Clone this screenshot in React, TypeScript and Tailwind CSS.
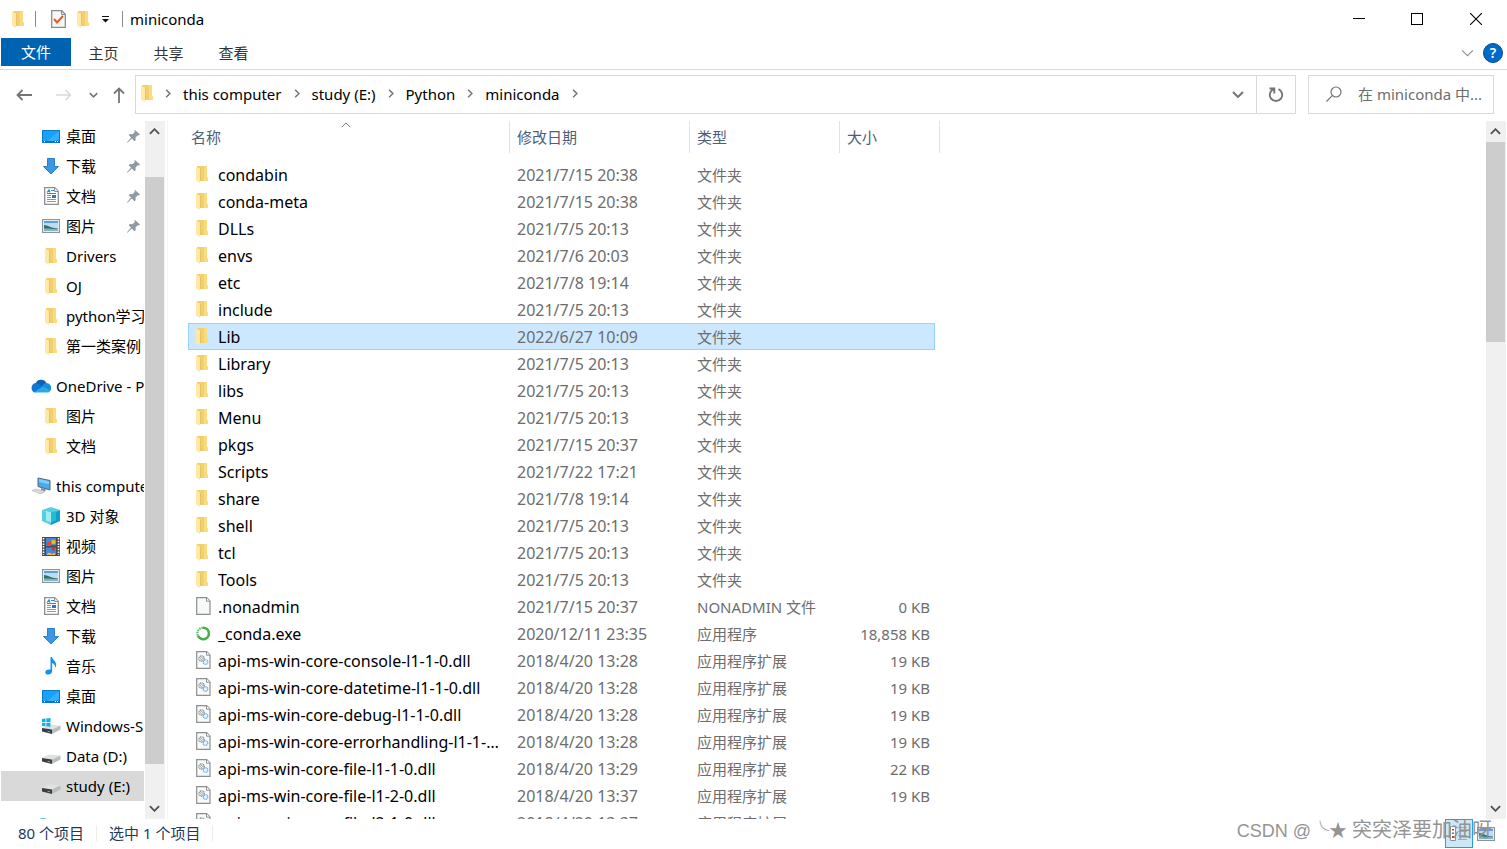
import { useState } from "react";
import type { ReactNode } from "react";

type FileKind = "folder" | "blank" | "exe" | "dll";

interface FileEntry {
  name: string;
  date: string;
  kind: FileKind;
  type: string;
  size?: string;
}

interface NavEntry {
  label: string;
  icon: ReactNode;
  pinned?: boolean;
  root?: boolean;
  spaced?: boolean;
  current?: boolean;
}

const FolderIcon = () => (
  <svg width="12" height="17" viewBox="0 0 12 17" aria-hidden="true">
    <path d="M1 0h10v11l1 1v3H2z" fill="#f3d06d" />
    <path d="M8 0h3v11l1 1v3H8z" fill="#fadc80" />
    <path d="M0 .5l4 2.2V17L0 14.6z" fill="#ffe9a6" />
    <path d="M4 2.7h1V15H4z" fill="#e8c360" />
  </svg>
);

const DesktopIcon = () => (
  <svg width="18" height="13" viewBox="0 0 18 13" aria-hidden="true">
    <rect x=".5" y=".5" width="17" height="12" fill="#18a0fb" stroke="#0b7bc9" />
    <path d="M17 1v8L8 12H4z" fill="#35b0ff" />
    <path d="M1 11.5h16" stroke="#0b6fb8" />
    <path d="M2 11.5h1M13 11.5h1M15 11.5h1" stroke="#fff" />
  </svg>
);

const DownloadIcon = () => (
  <svg width="18" height="17" viewBox="0 0 18 17" aria-hidden="true">
    <path d="M5.5.5h7v8h4L9 16 1.5 8.5h4z" fill="#3d96e4" stroke="#2b7ecb" />
  </svg>
);

const DocumentIcon = () => (
  <svg width="15" height="18" viewBox="0 0 15 18" aria-hidden="true">
    <path d="M.7.7h10l3.6 3.6v13H.7z" fill="#fff" stroke="#8a8f94" strokeWidth="1.3" />
    <path d="M10.5.7v3.8h3.8" fill="#eee" stroke="#8a8f94" />
    <path d="M3 5.500L5 3l1 2.500M7 3.500h3M3 6.500h9" fill="none" stroke="#1b8fd6" strokeWidth="1.2" />
    <path d="M3 8.5h4M3 10.5h4M3 12.5h9M3 14.5h9" stroke="#7f9bb0" />
    <path d="M8 8h4v3H8z" fill="#2f78b9" />
  </svg>
);

const PictureIcon = () => (
  <svg width="18" height="14" viewBox="0 0 18 14" aria-hidden="true">
    <rect x=".6" y=".6" width="16.8" height="12.8" fill="#fff" stroke="#8f9498" strokeWidth="1.2" />
    <path d="M2 2h14v10H2z" fill="#b9def8" />
    <path d="M2 2h14v2H2z" fill="#5a9fe0" />
    <path d="M2 6c4 0 6 3 14 3.5V12H2z" fill="#3b6f60" />
    <path d="M2 9.5c5-.5 9 1 14 .5v2H2z" fill="#7db4d0" />
  </svg>
);

const CloudIcon = () => (
  <svg width="20" height="14" viewBox="0 0 20 14" aria-hidden="true">
    <path d="M4.5 4.5A6 6 0 0 1 15.5 4l-3 5-8-2z" fill="#0f5fb5" />
    <path d="M4.6 4a5 5 0 0 0-1 9.5L12 8 7.5 4.8A6 6 0 0 0 4.6 4z" fill="#0f78d4" />
    <path d="M15.5 4a4.8 4.8 0 0 1 3.5 8L11 7.5A5.5 5.5 0 0 1 15.5 4z" fill="#1490df" />
    <path d="M3 13.3L11.5 7.7l8 4a4 4 0 0 1-3.5 1.9H5a5 5 0 0 1-2-.3z" fill="#28a8ea" />
  </svg>
);

const ComputerIcon = () => (
  <svg width="20" height="18" viewBox="0 0 20 18" aria-hidden="true">
    <path d="M7 1l12 2.5v9.5L7 9.5z" fill="#47a9ee" stroke="#54667a" />
    <path d="M8 2l10 2.3v3L8 5z" fill="#85cbf8" />
    <path d="M10 11l5 1.5-1 2-4-1.5z" fill="#7d8a96" />
    <path d="M1 13.5l4-1.5 9 2.5L9.5 17z" fill="#d4dadd" stroke="#b3babf" strokeWidth=".7" />
  </svg>
);

const CubeIcon = () => (
  <svg width="18" height="18" viewBox="0 0 18 18" aria-hidden="true">
    <path d="M9 0l9 3-9 3.500L0 3z" fill="#56cfdd" />
    <path d="M0 3l9 3.5V18l-9-4z" fill="#4fd0df" />
    <path d="M18 3L9 6.5V18l9-4z" fill="#0b9fd0" />
    <path d="M9 5.500L4 4v9.500l5 2z" fill="#a4ebf2" />
    <path d="M9 5.500L14 4v9.500l-5 2z" fill="#28b9d4" />
  </svg>
);

const VideoIcon = () => (
  <svg width="18" height="19" viewBox="0 0 18 19" aria-hidden="true">
    <path d="M0 0h18v19H0z" fill="#4a4a4a" />
    <path d="M1.5 1v17M16.5 1v17" stroke="#fff" strokeWidth="1.6" strokeDasharray="1.5 1.2" />
    <path d="M4 1h10v8H4zM4 10.5h10V18H4z" fill="#4c86dc" />
    <path d="M5 5h4v3H5z" fill="#d94a2c" />
    <circle cx="11.5" cy="5" r="2.2" fill="#e3b92c" />
    <path d="M9 8h5v1H9z" fill="#2f7a3a" />
    <circle cx="11.5" cy="12" r="1.6" fill="#c23a26" />
    <path d="M5 17l2-1.5 3 1.5 3-1v2H5z" fill="#e8c33c" />
  </svg>
);

const MusicIcon = () => (
  <svg width="12" height="18" viewBox="0 0 12 18" aria-hidden="true">
    <path d="M5.5 0h1.6c.2 3 4.4 4 4.1 8.5-.1 1-.5 1.7-1 2.3C10.500 8 9 6.800 7.100 6v8.500C7 16.500 5 17.500 3.200 17.500 1.400 17.500.3 16.600.3 15.200c0-1.800 2-3.200 5.200-2.600z" fill="#0c94f2" />
  </svg>
);

const DriveIcon = ({ system = false }: { system?: boolean }) => (
  <svg width="19" height="16" viewBox="0 0 19 16" aria-hidden="true">
    <path d="M0 10l7-3.5 11.5 1L10 11.5z" fill="#dfe1e2" />
    <path d="M0 10l10 1.5V16L0 13.5z" fill="#3b3d3f" />
    <path d="M10 11.5l8.5-4v4L10 16z" fill="#b9bcbe" />
    <path d="M5.5 12.8l2.5.5v1l-2.5-.5z" fill="#35e03a" />
    {system && (
      <>
        <path d="M0 0h9v8H0z" fill="#fff" />
        <path d="M0 1l3.5-.5V4H0zM4.3.4L8.500 0v4H4.300zM0 4.700h3.500v3.500L0 7.700zM4.300 4.700h4.200v4l-4.200-.5z" fill="#12b0e8" />
      </>
    )}
  </svg>
);

const NetworkIcon = () => (
  <svg width="20" height="16" viewBox="0 0 20 16" aria-hidden="true">
    <circle cx="12" cy="7" r="7" fill="#57b7dd" />
    <path d="M6 5c4-2 8 2 12 0" fill="none" stroke="#bfe6f4" strokeWidth="1.5" />
  </svg>
);

const PinIcon = () => (
  <svg width="13" height="13" viewBox="0 0 13 13" aria-hidden="true">
    <path d="M8 0l5 4.5-1.2 1-1-.3L8.500 7.600l.2 2.600-1.200 1L4.800 8.600.5 12.800 0 12.300l4-4.700-2.300-2.300 1.100-1.200 2.700.1L8 1.800 7.200.8z" fill="#8f9aa3" />
  </svg>
);

const PageIcon = () => (
  <svg width="15" height="18" viewBox="0 0 15 18" aria-hidden="true">
    <path d="M.7.7h10l3.3 3.3v13.3H.7z" fill="#f7f8f8" stroke="#8c8f91" strokeWidth="1.2" />
    <path d="M10.5.7v3.5H14" fill="#fff" stroke="#8c8f91" />
  </svg>
);

const ExeIcon = () => (
  <svg width="15" height="15" viewBox="0 0 15 15" aria-hidden="true">
    <path d="M7 1.800a5.700 5.700 0 1 1-5 8" fill="none" stroke="#43b049" strokeWidth="2.600" />
    <path d="M1.700 9.500A5.700 5.700 0 0 1 7 1.800" fill="none" stroke="#5cba61" strokeWidth="2.200" strokeDasharray="1.500 .8" />
  </svg>
);

const DllIcon = () => (
  <svg width="15" height="18" viewBox="0 0 15 18" aria-hidden="true">
    <path d="M.7.7h10l3.3 3.3v13.3H.7z" fill="#f9fafa" stroke="#8c8f91" strokeWidth="1.2" />
    <path d="M10.5.7v3.5H14" fill="#fff" stroke="#8c8f91" />
    <circle cx="5.5" cy="7.5" r="2.6" fill="none" stroke="#8d9398" strokeWidth="1.4" strokeDasharray="1.2 .5" />
    <circle cx="5.5" cy="7.5" r="1" fill="none" stroke="#8d9398" strokeWidth=".7" />
    <circle cx="9.5" cy="11" r="2.3" fill="#e8f3fb" stroke="#78aede" strokeWidth="1.3" strokeDasharray="1.2 .4" />
  </svg>
);

interface ChevronProps {
  direction: "up" | "down" | "right";
  width?: number;
  height?: number;
  color?: string;
  weight?: number;
}

const chevronPaths = {
  up: "M1 6L6 1l5 5",
  down: "M1 1l5 5 5-5",
  right: "M1 1l5 5-5 5",
};

const Chevron = ({ direction, width = 11, height = 7, color = "#505050", weight = 2 }: ChevronProps) => (
  <svg
    width={width}
    height={height}
    viewBox={direction === "right" ? "0 0 7 12" : "0 0 12 7"}
    fill="none"
    stroke={color}
    strokeWidth={weight}
    aria-hidden="true"
  >
    <path d={chevronPaths[direction]} />
  </svg>
);

const navEntries: NavEntry[] = [
  { label: "桌面", icon: <DesktopIcon />, pinned: true },
  { label: "下载", icon: <DownloadIcon />, pinned: true },
  { label: "文档", icon: <DocumentIcon />, pinned: true },
  { label: "图片", icon: <PictureIcon />, pinned: true },
  { label: "Drivers", icon: <FolderIcon /> },
  { label: "OJ", icon: <FolderIcon /> },
  { label: "python学习", icon: <FolderIcon /> },
  { label: "第一类案例", icon: <FolderIcon /> },
  { label: "OneDrive - Personal", icon: <CloudIcon />, root: true, spaced: true },
  { label: "图片", icon: <FolderIcon /> },
  { label: "文档", icon: <FolderIcon /> },
  { label: "this computer", icon: <ComputerIcon />, root: true, spaced: true },
  { label: "3D 对象", icon: <CubeIcon /> },
  { label: "视频", icon: <VideoIcon /> },
  { label: "图片", icon: <PictureIcon /> },
  { label: "文档", icon: <DocumentIcon /> },
  { label: "下载", icon: <DownloadIcon /> },
  { label: "音乐", icon: <MusicIcon /> },
  { label: "桌面", icon: <DesktopIcon /> },
  { label: "Windows-SSD (C:)", icon: <DriveIcon system /> },
  { label: "Data (D:)", icon: <DriveIcon /> },
  { label: "study (E:)", icon: <DriveIcon />, current: true },
  { label: "", icon: <NetworkIcon />, root: true, spaced: true },
];

const folder = (name: string, date: string): FileEntry => ({ name, date, kind: "folder", type: "文件夹" });
const dll = (name: string, date: string, size: string): FileEntry => ({
  name,
  date,
  kind: "dll",
  type: "应用程序扩展",
  size,
});

const files: FileEntry[] = [
  folder("condabin", "2021/7/15 20:38"),
  folder("conda-meta", "2021/7/15 20:38"),
  folder("DLLs", "2021/7/5 20:13"),
  folder("envs", "2021/7/6 20:03"),
  folder("etc", "2021/7/8 19:14"),
  folder("include", "2021/7/5 20:13"),
  folder("Lib", "2022/6/27 10:09"),
  folder("Library", "2021/7/5 20:13"),
  folder("libs", "2021/7/5 20:13"),
  folder("Menu", "2021/7/5 20:13"),
  folder("pkgs", "2021/7/15 20:37"),
  folder("Scripts", "2021/7/22 17:21"),
  folder("share", "2021/7/8 19:14"),
  folder("shell", "2021/7/5 20:13"),
  folder("tcl", "2021/7/5 20:13"),
  folder("Tools", "2021/7/5 20:13"),
  { name: ".nonadmin", date: "2021/7/15 20:37", kind: "blank", type: "NONADMIN 文件", size: "0 KB" },
  { name: "_conda.exe", date: "2020/12/11 23:35", kind: "exe", type: "应用程序", size: "18,858 KB" },
  dll("api-ms-win-core-console-l1-1-0.dll", "2018/4/20 13:28", "19 KB"),
  dll("api-ms-win-core-datetime-l1-1-0.dll", "2018/4/20 13:28", "19 KB"),
  dll("api-ms-win-core-debug-l1-1-0.dll", "2018/4/20 13:28", "19 KB"),
  dll("api-ms-win-core-errorhandling-l1-1-0.dll", "2018/4/20 13:28", "19 KB"),
  dll("api-ms-win-core-file-l1-1-0.dll", "2018/4/20 13:29", "22 KB"),
  dll("api-ms-win-core-file-l1-2-0.dll", "2018/4/20 13:37", "19 KB"),
  dll("api-ms-win-core-file-l2-1-0.dll", "2018/4/20 13:37", "19 KB"),
];

const fileIcons: Record<FileKind, ReactNode> = {
  folder: <FolderIcon />,
  blank: <PageIcon />,
  exe: <ExeIcon />,
  dll: <DllIcon />,
};

const TitleBar = () => (
  <header className="flex h-[38px] shrink-0 items-center pr-px pl-3">
    <FolderIcon />
    <span className="ml-[11px] h-4 w-px bg-[#8a8a8a]" />
    <button type="button" aria-label="属性" className="ml-[15px]">
      <svg width="15" height="18" viewBox="0 0 15 18" aria-hidden="true">
        <path d="M.7.7h10l3.6 3.6v13H.7z" fill="#f6f7f8" stroke="#8a8d90" strokeWidth="1.3" />
        <path d="M10.5.7v3.8h3.8" fill="none" stroke="#8a8d90" />
        <path d="M3 9l3 3.5 6-6.5" fill="none" stroke="#ea5a1c" strokeWidth="2" />
      </svg>
    </button>
    <button type="button" aria-label="新建文件夹" className="ml-[11px]">
      <FolderIcon />
    </button>
    <button type="button" aria-label="自定义快速访问工具栏" className="ml-[13px]">
      <svg width="7" height="7" viewBox="0 0 7 7" aria-hidden="true">
        <path d="M0 0h7v1H0zM0 3h7L3.5 6.5z" fill="#111" />
      </svg>
    </button>
    <span className="ml-[13px] h-4 w-px bg-[#8a8a8a]" />
    <h1 className="ml-[7px]">miniconda</h1>
    <div className="ml-auto flex">
      <button type="button" aria-label="最小化" className="flex h-[38px] w-[58px] items-center justify-center">
        <svg width="12" height="12" viewBox="0 0 12 12" aria-hidden="true">
          <path d="M0 5.5h12" stroke="#000" />
        </svg>
      </button>
      <button type="button" aria-label="最大化" className="flex h-[38px] w-[58px] items-center justify-center">
        <svg width="12" height="12" viewBox="0 0 12 12" aria-hidden="true">
          <rect x=".5" y=".5" width="11" height="11" fill="none" stroke="#000" />
        </svg>
      </button>
      <button type="button" aria-label="关闭" className="flex h-[38px] w-[60px] items-center justify-center">
        <svg width="12" height="12" viewBox="0 0 12 12" aria-hidden="true">
          <path d="M0 0l12 12M12 0L0 12" stroke="#000" strokeWidth="1.1" />
        </svg>
      </button>
    </div>
  </header>
);

const RibbonTabs = () => (
  <div className="flex h-8 shrink-0 items-start border-b border-[#dadbdc]">
    <button type="button" className="ml-px h-7 w-[70px] bg-[#0063b1] text-white">
      文件
    </button>
    <div className="flex text-[#333]">
      {["主页", "共享", "查看"].map((tab) => (
        <button key={tab} type="button" className="h-[30px] w-[65px] text-center">
          {tab}
        </button>
      ))}
    </div>
    <div className="ml-auto flex h-[30px] items-center gap-[9px] pr-1">
      <button type="button" aria-label="展开功能区">
        <Chevron direction="down" width={13} height={8} color="#909090" weight={1} />
      </button>
      <button
        type="button"
        aria-label="帮助"
        className="flex size-5 items-center justify-center rounded-full border border-[#004f97] bg-[#0069cc] text-sm leading-none font-semibold text-white"
      >
        ?
      </button>
    </div>
  </div>
);

const AddressRow = () => (
  <div className="flex shrink-0 pt-[5px] pr-[13px] pb-[7px]">
    <div className="flex w-[135px] items-center pl-4">
      <button type="button" aria-label="后退">
        <svg width="16" height="12" viewBox="0 0 16 12" fill="none" stroke="#757575" strokeWidth="1.8" aria-hidden="true">
          <path d="M6.5 1l-5 5 5 5M1.5 6H16" />
        </svg>
      </button>
      <button type="button" aria-label="前进" className="ml-6">
        <svg width="16" height="12" viewBox="0 0 16 12" fill="none" stroke="#d9d9d9" strokeWidth="1.5" aria-hidden="true">
          <path d="M9.5 1l5 5-5 5M14.5 6H0" />
        </svg>
      </button>
      <button type="button" aria-label="最近浏览的位置" className="ml-[17px]">
        <Chevron direction="down" width={9} height={6} color="#757575" />
      </button>
      <button type="button" aria-label="上移" className="ml-[15px]">
        <svg width="12" height="16" viewBox="0 0 12 16" fill="none" stroke="#757575" strokeWidth="1.8" aria-hidden="true">
          <path d="M1 6.5l5-5 5 5M6 1.5V16" />
        </svg>
      </button>
    </div>
    <nav aria-label="地址" className="flex h-[39px] flex-1 items-center border border-[#d9d9d9] pl-[5px]">
      <div className="flex items-center pb-[2px]">
        <FolderIcon />
        {["this computer", "study (E:)", "Python", "miniconda"].map((part) => (
          <span key={part} className="flex items-center">
            <span className="flex w-[30px] justify-center">
              <Chevron direction="right" width={6} height={9} color="#757575" />
            </span>
            <button type="button">{part}</button>
          </span>
        ))}
        <span className="flex w-[30px] justify-center">
          <Chevron direction="right" width={6} height={9} color="#757575" />
        </span>
      </div>
      <button type="button" aria-label="以前的位置" className="mr-3 ml-auto">
        <Chevron direction="down" width={12} height={7} color="#757575" />
      </button>
      <button
        type="button"
        aria-label="刷新"
        className="flex h-full w-[39px] items-center justify-center border-l border-[#d9d9d9]"
      >
        <svg width="16" height="16" viewBox="0 0 16 16" fill="none" stroke="#757575" strokeWidth="1.9" aria-hidden="true">
          <path d="M10.5 2.2a6.2 6.2 0 1 1-5 0M1.500 1.500h4.800v5" />
        </svg>
      </button>
    </nav>
    <label className="ml-3 flex w-[186px] items-center gap-4 border border-[#d9d9d9] pb-[2px] pl-[17px]">
      <svg width="16" height="16" viewBox="0 0 16 16" fill="none" stroke="#757575" strokeWidth="1.2" aria-hidden="true" className="shrink-0">
        <circle cx="10" cy="6" r="5" />
        <path d="M6.3 9.7L.5 15.5" />
      </svg>
      <input
        type="text"
        aria-label="搜索"
        placeholder="在 miniconda 中..."
        className="min-w-0 flex-1 bg-transparent outline-none placeholder:text-[#6d6d6d]"
      />
    </label>
  </div>
);

const NavTree = () => (
  <nav aria-label="导航窗格" className="min-h-0 w-[144px] overflow-hidden pl-px">
    {navEntries.map((entry, index) => (
      <a
        key={index}
        href="#"
        aria-label={entry.label || "网络"}
        className={`flex h-[30px] items-center gap-[5px] overflow-hidden whitespace-nowrap ${entry.root ? "pl-[30px]" : "pl-10"} ${
          entry.spaced ? "mt-[10px]" : ""
        } ${entry.current ? "bg-[#d9d9d9]" : ""}`}
      >
        <span className="flex w-5 shrink-0 justify-center">{entry.icon}</span>
        <span>{entry.label}</span>
        {entry.pinned && (
          <span className="mr-1 ml-auto">
            <PinIcon />
          </span>
        )}
      </a>
    ))}
  </nav>
);

interface ScrollBarProps {
  before: string;
  thumb: string;
}

const ScrollBar = ({ before, thumb }: ScrollBarProps) => (
  <div className="flex w-5 shrink-0 flex-col bg-[#f0f0f0] pr-px" aria-hidden="true">
    <div className="flex h-[21px] shrink-0 items-center justify-center">
      <Chevron direction="up" />
    </div>
    <div className="flex min-h-0 flex-1 flex-col">
      <div className={before} />
      <div className={`bg-[#cdcdcd] ${thumb}`} />
    </div>
    <div className="flex h-[21px] shrink-0 items-center justify-center">
      <Chevron direction="down" />
    </div>
  </div>
);

const columnHead = "flex h-8 w-full items-center border-r border-[#e2e2e2] pl-[7px]";

interface FileTableProps {
  selected: string;
  onSelect: (name: string) => void;
}

const FileTable = ({ selected, onSelect }: FileTableProps) => (
  <table className="w-[752px] table-fixed border-separate border-spacing-0 text-left">
    <colgroup>
      <col className="w-[322px]" />
      <col className="w-[180px]" />
      <col className="w-[150px]" />
      <col className="w-[95px]" />
      <col className="w-[5px]" />
    </colgroup>
    <thead className="text-[#4c607a]">
      <tr className="h-10 align-top">
        <th className="relative p-0 font-normal">
          <span className="absolute top-px left-[153px]">
            <Chevron direction="up" width={10} height={6} color="#606060" weight={1} />
          </span>
          <button type="button" className="flex h-8 w-full items-center border-r border-[#e2e2e2] pl-[3px]">
            名称
          </button>
        </th>
        <th className="p-0 font-normal">
          <button type="button" className={columnHead}>
            修改日期
          </button>
        </th>
        <th className="p-0 font-normal">
          <button type="button" className={columnHead}>
            类型
          </button>
        </th>
        <th colSpan={2} className="p-0 font-normal">
          <button type="button" className={columnHead}>
            大小
          </button>
        </th>
      </tr>
    </thead>
    <tbody className="text-[#6d6d6d]">
      {files.map((file) => {
        const active = file.name === selected;
        const cell = active ? "border-y border-[#99d1ff] bg-[#cce8ff]" : "border-y border-transparent";
        return (
          <tr key={file.name} onClick={() => onSelect(file.name)} className="h-[27px]">
            <td className={`p-0 ${active ? "border-l" : ""} ${cell}`}>
              <div className={`flex h-[25px] items-center ${active ? "pl-[7px]" : "pl-2"}`}>
                <span className="flex w-[22px] shrink-0 pb-px">{fileIcons[file.kind]}</span>
                <span className="w-[284px] truncate text-base leading-5 text-black">{file.name}</span>
              </div>
            </td>
            <td className={`p-0 pl-[7px] text-base leading-5 ${cell}`}>{file.date}</td>
            <td className={`p-0 pl-[7px] ${cell}`}>{file.type}</td>
            <td className={`p-0 text-right ${active ? "border-r pr-1" : "pr-[5px]"} ${cell}`}>{file.size}</td>
            <td className="p-0" />
          </tr>
        );
      })}
    </tbody>
  </table>
);

const StatusBar = () => (
  <footer className="relative flex h-[30px] shrink-0 items-center pr-2 pl-[18px] text-[#1e395b]">
    <div className="flex items-center pb-[2px]">
      <span>80 个项目</span>
      <span className="mx-3 h-4 w-px bg-[#ededed]" />
      <span>选中 1 个项目</span>
      <span className="mx-3 h-4 w-px bg-[#ededed]" />
    </div>
    <div className="ml-auto flex h-full items-start">
      <button
        type="button"
        aria-label="详细信息"
        className="flex h-[29px] w-7 items-center justify-center border border-[#26a0da] bg-[#cce8f7]"
      >
        <svg width="18" height="15" viewBox="0 0 18 15" aria-hidden="true">
          <path d="M.5.5h5v14h-5z" fill="#fff" stroke="#8c9297" />
          <path d="M2 3h2v1.500H2zM2 10h2v2H2z" fill="#b5402c" />
          <path d="M2 6.5h2V8H2z" fill="#3a78b5" />
          <path d="M8 1.5h9M8 5.5h9M8 9.5h9M8 13.5h9" stroke="#a4aab0" />
        </svg>
      </button>
      <button type="button" aria-label="大图标" className="flex h-[29px] w-[26px] items-center justify-center">
        <PictureIcon />
      </button>
    </div>
    <p className="pointer-events-none absolute top-0 right-[15px] font-['Liberation_Sans','Noto_Sans_CJK_SC',sans-serif] text-xl leading-[22px] whitespace-nowrap text-[#949494]">
      <span className="text-lg leading-[22px]">CSDN @╰★ </span>突突泽要加油呀
    </p>
  </footer>
);

export default function App() {
  const [selected, setSelected] = useState("Lib");

  return (
    <div className="flex h-screen flex-col overflow-hidden bg-white font-['Noto_Sans','Noto_Sans_CJK_SC',sans-serif] text-[15px] leading-5 text-black">
      <TitleBar />
      <RibbonTabs />
      <AddressRow />
      <div className="flex min-h-0 flex-1 pr-px">
        <NavTree />
        <div className="ml-px flex">
          <ScrollBar before="h-[35px] shrink-0" thumb="mb-[34px] flex-1" />
        </div>
        <main className="ml-[2px] min-w-0 flex-1 overflow-hidden border-l border-[#f5f5f5] pl-5">
          <FileTable selected={selected} onSelect={setSelected} />
        </main>
        <ScrollBar before="h-0" thumb="h-[200px]" />
      </div>
      <StatusBar />
    </div>
  );
}
